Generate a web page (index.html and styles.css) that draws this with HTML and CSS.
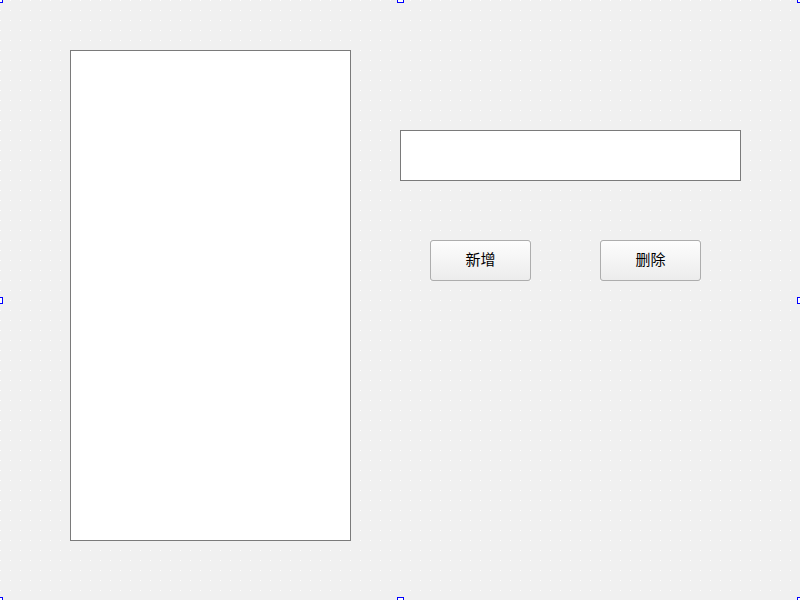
FILE: index.html
```html
<!DOCTYPE html>
<html lang="zh-CN">
<head>
  <meta charset="UTF-8">
  <meta name="viewport" content="width=device-width, initial-scale=1.0">
  <title>Form1</title>
  <link rel="stylesheet" href="styles.css">
</head>
<body>
  <div class="designer">
    <div class="list-box"></div>
    <div class="side">
      <div class="text-box"></div>
      <div class="buttons">
        <button class="btn" type="button">新增</button>
        <button class="btn" type="button">删除</button>
      </div>
    </div>

    <!-- selection handles of the form -->
    <span class="handle h-tl"></span>
    <span class="handle h-tc"></span>
    <span class="handle h-tr"></span>
    <span class="handle h-ml"></span>
    <span class="handle h-mr"></span>
    <span class="handle h-bl"></span>
    <span class="handle h-bc"></span>
    <span class="handle h-br"></span>
  </div>
</body>
</html>
```

FILE: styles.css
```css
html, body {
  margin: 0;
  padding: 0;
}

body {
  font-family: "Noto Sans CJK SC", "Liberation Sans", sans-serif;
  font-size: 14px;
  color: #000;
}

.designer {
  position: relative;
  width: 800px;
  height: 600px;
  overflow: hidden;
  box-sizing: border-box;
  padding: 50px 0 0 70px;
  display: flex;
  align-items: flex-start;
  background-color: #fff;
  background-image:
    linear-gradient(to right, transparent 1px, #f0f0f0 1px),
    linear-gradient(to bottom, transparent 1px, #f0f0f0 1px);
  background-size: 10px 10px;
}

.list-box {
  width: 281px;
  height: 491px;
  box-sizing: border-box;
  background: #fff;
  border: 1px solid #7a7a7a;
}

.side {
  margin-left: 49px;
  padding-top: 80px;
}

.text-box {
  width: 341px;
  height: 51px;
  box-sizing: border-box;
  background: #fff;
  border: 1px solid #7a7a7a;
}

.buttons {
  display: flex;
  gap: 69px;
  margin-top: 59px;
  padding-left: 30px;
}

.btn {
  width: 101px;
  height: 41px;
  box-sizing: border-box;
  border: 1px solid #adadad;
  border-radius: 3px;
  background: linear-gradient(to bottom, #fdfdfd, #ececec);
  font-family: inherit;
  font-size: 15px;
  line-height: 20px;
  color: #000;
  padding: 0 0 3px;
}

.handle {
  position: absolute;
  width: 5px;
  height: 5px;
  background: #fff;
  border: 1px solid #0000ff;
}

.h-tl { left: -4px; top: -4px; }
.h-tc { left: 397px; top: -4px; }
.h-tr { right: -4px; top: -4px; }
.h-ml { left: -4px; top: 297px; }
.h-mr { right: -4px; top: 297px; }
.h-bl { left: -4px; bottom: -4px; }
.h-bc { left: 397px; bottom: -4px; }
.h-br { right: -4px; bottom: -4px; }
```
